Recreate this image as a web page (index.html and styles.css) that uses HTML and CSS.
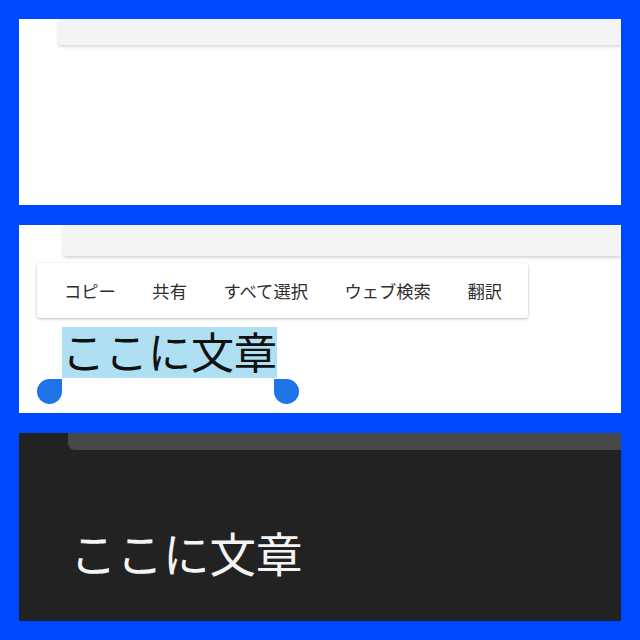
FILE: index.html
```html
<!DOCTYPE html>
<html lang="ja">
<head>
<meta charset="utf-8">
<title>Selection</title>
<link rel="stylesheet" href="styles.css">
</head>
<body>
<div class="stack">
  <section class="panel panel-light panel-one">
    <div class="bar bar-one"></div>
  </section>

  <section class="panel panel-light panel-two">
    <div class="bar bar-two"></div>
    <nav class="menu">
      <span class="menu-item">コピー</span>
      <span class="menu-item">共有</span>
      <span class="menu-item">すべて選択</span>
      <span class="menu-item">ウェブ検索</span>
      <span class="menu-item">翻訳</span>
    </nav>
    <div class="selection">
      <span class="selected-text">ここに文章</span>
      <span class="handle handle-left"></span>
      <span class="handle handle-right"></span>
    </div>
  </section>

  <section class="panel panel-dark">
    <div class="bar bar-dark"></div>
    <p class="dark-text">ここに文章</p>
  </section>
</div>
</body>
</html>
```

FILE: styles.css
```css
* {
  box-sizing: border-box;
}

html, body {
  margin: 0;
  padding: 0;
}

body {
  width: 640px;
  height: 640px;
  background: #0048ff;
  font-family: "Noto Sans CJK JP", "Noto Sans", sans-serif;
  overflow: hidden;
}

.stack {
  display: flex;
  flex-direction: column;
  gap: 20px;
  padding: 19px;
  height: 640px;
}

.panel {
  overflow: hidden;
  display: flex;
  flex-direction: column;
  align-items: flex-start;
}

.panel-light {
  background: #ffffff;
}

.panel-one {
  height: 186px;
}

.panel-two {
  height: 188px;
}

.panel-dark {
  height: 188px;
  background: #222222;
}

.bar {
  align-self: stretch;
  flex: none;
}

.bar-one {
  margin-left: 39px;
  height: 26px;
  background: #f4f4f4;
  border-bottom-left-radius: 4px;
  box-shadow: 0 2px 3px rgba(0, 0, 0, 0.14);
}

.bar-two {
  margin-left: 44px;
  height: 31px;
  background: #f4f4f4;
  border-bottom-left-radius: 4px;
  box-shadow: 0 2px 3px rgba(0, 0, 0, 0.16);
}

.bar-dark {
  margin-left: 49px;
  height: 17px;
  background: #474747;
  border-bottom-left-radius: 7px;
}

.menu {
  margin: 7px 0 0 18px;
  width: 491px;
  height: 55px;
  display: flex;
  align-items: center;
  gap: 36.5px;
  padding: 0 0 0 27px;
  background: #ffffff;
  border-radius: 3px;
  box-shadow: 0 1px 3px rgba(0, 0, 0, 0.28);
  position: relative;
  z-index: 1;
}

.menu-item {
  font-size: 17.3px;
  line-height: 24px;
  color: #2e2e2e;
  white-space: nowrap;
}

.selection {
  position: relative;
  margin: 9px 0 0 43px;
}

.selected-text {
  display: block;
  font-size: 43px;
  line-height: 46px;
  padding-bottom: 5px;
  height: 51px;
  width: 215px;
  background: #aedff2;
  color: #111111;
  white-space: nowrap;
}

.handle {
  position: absolute;
  top: 52px;
  width: 25px;
  height: 25px;
  background: #1e74e6;
}

.handle-left {
  left: -25px;
  border-radius: 50% 0 50% 50%;
}

.handle-right {
  left: 212px;
  border-radius: 0 50% 50% 50%;
}

.dark-text {
  margin: 74px 0 0 51px;
  font-size: 46.5px;
  line-height: 55px;
  color: #f4f4f4;
  white-space: nowrap;
}
```
